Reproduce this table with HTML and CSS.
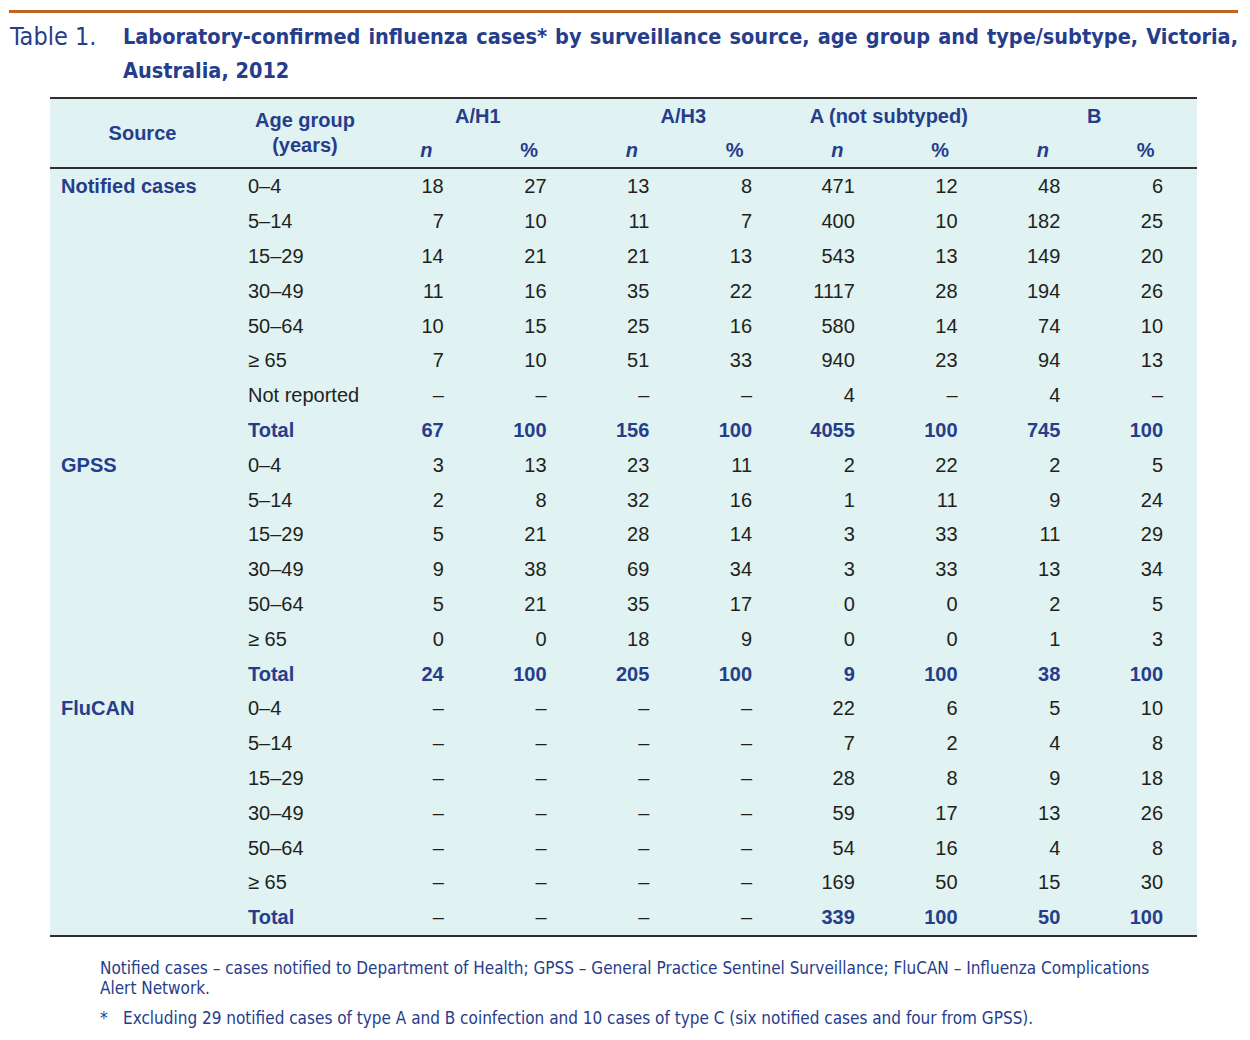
FILE: index.html
```html
<!DOCTYPE html>
<html lang="en">
<head>
<meta charset="utf-8">
<title>Table 1</title>
<link rel="stylesheet" href="styles.css">
</head>
<body>
<div class="page">
  <div class="rule-top"></div>
  <div class="caption">
    <span class="caption-label">Table 1.</span>
    <p class="caption-title">Laboratory-confirmed influenza cases* by surveillance source, age group and type/subtype, Victoria, Australia, 2012</p>
  </div>
  <table class="data">
    <colgroup>
      <col class="c-src"><col class="c-age">
      <col class="c-num"><col class="c-num"><col class="c-num"><col class="c-num">
      <col class="c-num"><col class="c-num"><col class="c-num"><col class="c-num">
    </colgroup>
    <thead>
      <tr class="h1">
        <th rowspan="2" class="h-src">Source</th>
        <th rowspan="2" class="h-age">Age group<br>(years)</th>
        <th colspan="2">A/H1</th>
        <th colspan="2">A/H3</th>
        <th colspan="2">A (not subtyped)</th>
        <th colspan="2">B</th>
      </tr>
      <tr class="h2">
        <th><i>n</i></th><th>%</th>
        <th><i>n</i></th><th>%</th>
        <th><i>n</i></th><th>%</th>
        <th><i>n</i></th><th>%</th>
      </tr>
    </thead>
    <tbody>
      <tr><td class="src">Notified cases</td><td class="age">0–4</td><td>18</td><td>27</td><td>13</td><td>8</td><td>471</td><td>12</td><td>48</td><td>6</td></tr>
      <tr><td class="src"></td><td class="age">5–14</td><td>7</td><td>10</td><td>11</td><td>7</td><td>400</td><td>10</td><td>182</td><td>25</td></tr>
      <tr><td class="src"></td><td class="age">15–29</td><td>14</td><td>21</td><td>21</td><td>13</td><td>543</td><td>13</td><td>149</td><td>20</td></tr>
      <tr><td class="src"></td><td class="age">30–49</td><td>11</td><td>16</td><td>35</td><td>22</td><td>1117</td><td>28</td><td>194</td><td>26</td></tr>
      <tr><td class="src"></td><td class="age">50–64</td><td>10</td><td>15</td><td>25</td><td>16</td><td>580</td><td>14</td><td>74</td><td>10</td></tr>
      <tr><td class="src"></td><td class="age">≥ 65</td><td>7</td><td>10</td><td>51</td><td>33</td><td>940</td><td>23</td><td>94</td><td>13</td></tr>
      <tr><td class="src"></td><td class="age">Not reported</td><td>–</td><td>–</td><td>–</td><td>–</td><td>4</td><td>–</td><td>4</td><td>–</td></tr>
      <tr class="total"><td class="src"></td><td class="age">Total</td><td>67</td><td>100</td><td>156</td><td>100</td><td>4055</td><td>100</td><td>745</td><td>100</td></tr>
      <tr><td class="src">GPSS</td><td class="age">0–4</td><td>3</td><td>13</td><td>23</td><td>11</td><td>2</td><td>22</td><td>2</td><td>5</td></tr>
      <tr><td class="src"></td><td class="age">5–14</td><td>2</td><td>8</td><td>32</td><td>16</td><td>1</td><td>11</td><td>9</td><td>24</td></tr>
      <tr><td class="src"></td><td class="age">15–29</td><td>5</td><td>21</td><td>28</td><td>14</td><td>3</td><td>33</td><td>11</td><td>29</td></tr>
      <tr><td class="src"></td><td class="age">30–49</td><td>9</td><td>38</td><td>69</td><td>34</td><td>3</td><td>33</td><td>13</td><td>34</td></tr>
      <tr><td class="src"></td><td class="age">50–64</td><td>5</td><td>21</td><td>35</td><td>17</td><td>0</td><td>0</td><td>2</td><td>5</td></tr>
      <tr><td class="src"></td><td class="age">≥ 65</td><td>0</td><td>0</td><td>18</td><td>9</td><td>0</td><td>0</td><td>1</td><td>3</td></tr>
      <tr class="total"><td class="src"></td><td class="age">Total</td><td>24</td><td>100</td><td>205</td><td>100</td><td>9</td><td>100</td><td>38</td><td>100</td></tr>
      <tr><td class="src">FluCAN</td><td class="age">0–4</td><td>–</td><td>–</td><td>–</td><td>–</td><td>22</td><td>6</td><td>5</td><td>10</td></tr>
      <tr><td class="src"></td><td class="age">5–14</td><td>–</td><td>–</td><td>–</td><td>–</td><td>7</td><td>2</td><td>4</td><td>8</td></tr>
      <tr><td class="src"></td><td class="age">15–29</td><td>–</td><td>–</td><td>–</td><td>–</td><td>28</td><td>8</td><td>9</td><td>18</td></tr>
      <tr><td class="src"></td><td class="age">30–49</td><td>–</td><td>–</td><td>–</td><td>–</td><td>59</td><td>17</td><td>13</td><td>26</td></tr>
      <tr><td class="src"></td><td class="age">50–64</td><td>–</td><td>–</td><td>–</td><td>–</td><td>54</td><td>16</td><td>4</td><td>8</td></tr>
      <tr><td class="src"></td><td class="age">≥ 65</td><td>–</td><td>–</td><td>–</td><td>–</td><td>169</td><td>50</td><td>15</td><td>30</td></tr>
      <tr class="total"><td class="src"></td><td class="age">Total</td><td class="dash">–</td><td class="dash">–</td><td class="dash">–</td><td class="dash">–</td><td>339</td><td>100</td><td>50</td><td>100</td></tr>
    </tbody>
  </table>
  <div class="notes">
    <p class="note">Notified cases – cases notified to Department of Health; GPSS – General Practice Sentinel Surveillance; FluCAN – Influenza Complications Alert Network.</p>
    <p class="note star"><span class="star-mark">*</span><span>Excluding 29 notified cases of type A and B coinfection and 10 cases of type C (six notified cases and four from GPSS).</span></p>
  </div>
</div>
</body>
</html>
```

FILE: styles.css
```css
html, body {
  margin: 0;
  padding: 0;
  background: #ffffff;
}

.page {
  width: 1250px;
  padding-top: 10px;
}

.rule-top {
  margin-left: 9px;
  width: 1229px;
  height: 3px;
  background: #c0641e;
}

.caption {
  display: flex;
  margin-left: 10px;
  width: 1228px;
  margin-top: 7px;
  color: #263d8c;
  font-family: "Liberation Sans Narrow", "DejaVu Sans Condensed", "Liberation Sans", sans-serif;
  font-size: 25px;
  line-height: 34px;
}

.caption-label {
  flex: 0 0 113px;
  font-weight: normal;
}

.caption-title {
  margin: 0;
  flex: 1;
  font-weight: bold;
  font-size: 21.5px;
  text-align: justify;
}

.data {
  margin-top: 9px;
  margin-left: 50px;
  width: 1147px;
  table-layout: fixed;
  border-collapse: collapse;
  background: #e0f2f1;
  font-family: "Liberation Sans", Arial, sans-serif;
  font-size: 20px;
  color: #231f20;
  border-top: 2px solid #2f2f2f;
  border-bottom: 2px solid #2f2f2f;
}

.c-src { width: 185px; }
.c-age { width: 140px; }
.c-num { width: 102.75px; }

.data th {
  color: #263d8c;
  font-weight: bold;
  text-align: center;
  padding: 0;
  height: 34px;
  line-height: 25px;
}

.data thead tr.h2 th {
  border-bottom: 2px solid #2f2f2f;
}

.data th.h-src,
.data th.h-age {
  border-bottom: 2px solid #2f2f2f;
}

.data td {
  height: 34.8px;
  padding: 0 34px 0 0;
  text-align: right;
  line-height: 24px;
}

.data td.src {
  text-align: left;
  padding: 0 0 0 11px;
  color: #263d8c;
  font-weight: bold;
}

.data td.age {
  text-align: left;
  padding: 0 0 0 13px;
}

.data tr.total td {
  color: #263d8c;
  font-weight: bold;
}

.data tr.total td.dash {
  color: #231f20;
  font-weight: normal;
}

.notes {
  margin-top: 21px;
  margin-left: 100px;
  width: 1060px;
  color: #263d8c;
  font-family: "Liberation Sans Narrow", "DejaVu Sans Condensed", "Liberation Sans", sans-serif;
  font-size: 17px;
  line-height: 20px;
}

.note {
  margin: 0 0 10px 0;
}

.note.star {
  display: flex;
}

.star-mark {
  flex: 0 0 23px;
}
```
